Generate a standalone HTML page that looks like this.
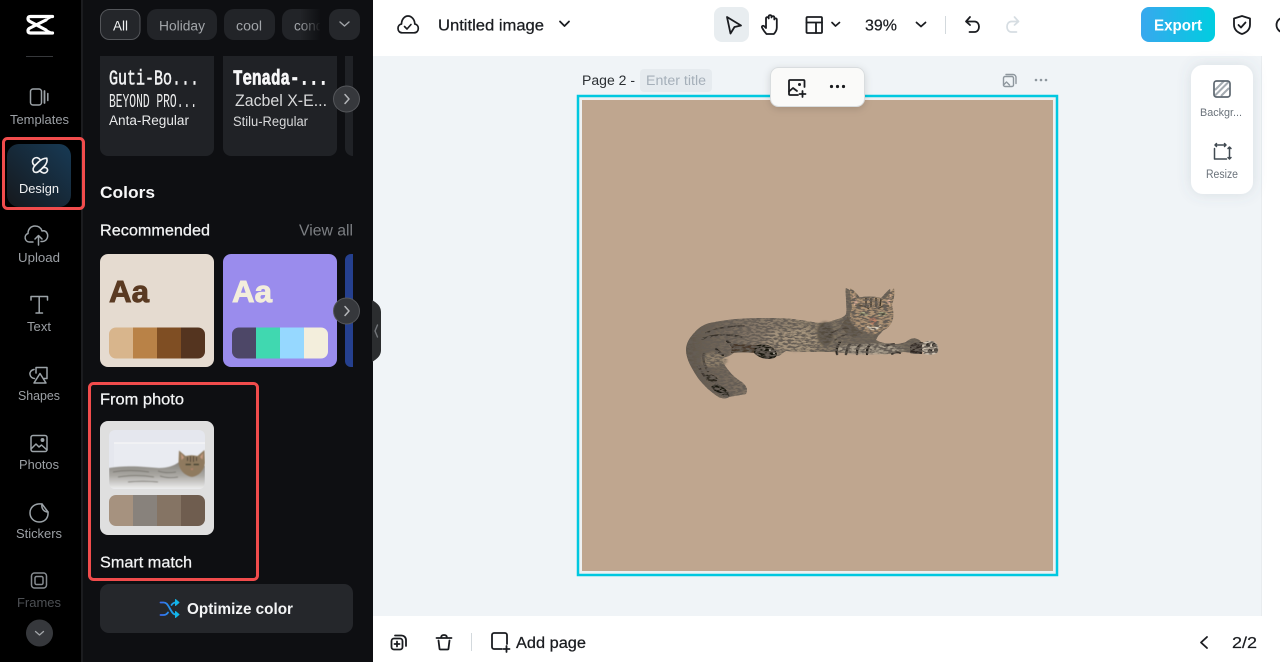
<!DOCTYPE html>
<html><head><meta charset="utf-8"><title>Design</title>
<style>
html,body{margin:0;padding:0;width:1280px;height:662px;overflow:hidden;background:#fff}
svg{display:block;position:absolute;left:0;top:0}
text{font-family:"Liberation Sans",sans-serif}
.n{font-size:13px;fill:#9ca0a5;text-anchor:start}
.k{fill:#1a1c20}
.i{fill:none;stroke:#1a1c20;stroke-width:1.800;stroke-linecap:round;stroke-linejoin:round}
.s{fill:none;stroke:#9ca3a8;stroke-width:1.500;stroke-linecap:round;stroke-linejoin:round}
</style></head><body>
<svg width="1280" height="662" viewBox="0 0 1280 662" xmlns="http://www.w3.org/2000/svg">
<defs>
<linearGradient id="dg" x1="0" y1="1" x2="1" y2="0"><stop offset="0" stop-color="#16181c"/><stop offset="1" stop-color="#173a55"/></linearGradient>
<linearGradient id="ex" x1="0" y1="0" x2="1" y2="0"><stop offset="0" stop-color="#38a8ee"/><stop offset="1" stop-color="#00cde0"/></linearGradient>
<linearGradient id="fade" x1="0" y1="0" x2="1" y2="0"><stop offset="0" stop-color="#0e0f12" stop-opacity="0"/><stop offset="1" stop-color="#0e0f12" stop-opacity=".95"/></linearGradient>
<linearGradient id="sh" x1="0" y1="0" x2="1" y2="0"><stop offset="0" stop-color="#3a6bf0"/><stop offset="1" stop-color="#12b6e8"/></linearGradient>
<linearGradient id="body" x1="0" y1="0" x2="1" y2="0"><stop offset="0" stop-color="#5e554a"/><stop offset=".3" stop-color="#87796a"/><stop offset=".5" stop-color="#9a8a74"/><stop offset=".72" stop-color="#6f6558"/><stop offset="1" stop-color="#746a5c"/></linearGradient>
<linearGradient id="tb" x1="0" y1="0" x2="0" y2="1"><stop offset="0" stop-color="#85827c"/><stop offset=".5" stop-color="#aaa8a3"/><stop offset="1" stop-color="#eeeeee"/></linearGradient>
<clipPath id="c1"><rect x="100" y="56" width="253" height="100"/></clipPath>
<clipPath id="c2"><rect x="109" y="430" width="96" height="59" rx="6"/></clipPath>
<clipPath id="p1"><rect x="109" y="327.500" width="96" height="31" rx="7"/></clipPath>
<clipPath id="p2"><rect x="232" y="327.500" width="96" height="31" rx="7"/></clipPath>
<clipPath id="p3"><rect x="109" y="495" width="96" height="31" rx="7"/></clipPath>
<filter id="sd" x="-20%" y="-30%" width="140%" height="170%"><feDropShadow dx="0" dy="2" stdDeviation="4" flood-color="#000" flood-opacity=".14"/></filter>
<filter id="sd2" x="-40%" y="-20%" width="180%" height="140%"><feDropShadow dx="0" dy="0" stdDeviation="7" flood-color="#5a6a78" flood-opacity=".16"/></filter>
<filter id="b1"><feGaussianBlur stdDeviation=".5"/></filter>
<filter id="b2"><feGaussianBlur stdDeviation="1.200"/></filter>
<filter id="fur" x="-5%" y="-5%" width="110%" height="110%">
<feTurbulence type="fractalNoise" baseFrequency=".22 .6" numOctaves="2" seed="7" result="n"/>
<feColorMatrix in="n" type="matrix" values="0 0 0 0 .13  0 0 0 0 .11  0 0 0 0 .09  5 0 0 0 -2" result="d"/>
<feComposite in="d" in2="SourceAlpha" operator="in" result="dc"/>
<feMerge result="m"><feMergeNode in="SourceGraphic"/><feMergeNode in="dc"/></feMerge>
<feGaussianBlur in="m" stdDeviation=".35"/>
</filter>
</defs>

<!-- backgrounds -->
<rect width="1280" height="662" fill="#f0f4f7"/>
<rect x="373" y="0" width="907" height="56" fill="#fff"/>
<rect x="373" y="616" width="907" height="46" fill="#fff"/>
<rect x="1262" y="56" width="18" height="560" fill="#fff"/>
<rect x="1261" y="56" width="1" height="560" fill="#e8ecef"/>
<rect width="82" height="662" fill="#000"/>
<rect x="81" width="2" height="662" fill="#1b1c1f"/>
<rect x="83" width="290" height="662" fill="#0e0f12"/>

<!-- logo -->
<g fill="none" stroke="#fff" stroke-linecap="round" stroke-linejoin="round">
<path d="M52.500 16.500H30.500Q28 16.500 28 18.800Q28 20.500 30 21.500L46 30" stroke-width="3.200"/>
<path d="M52.500 33H30.500Q28 33 28 30.700Q28 29 30 28L46 20" stroke-width="3.200"/>
<path d="M45 20.500L52 16.500M45 29.500L52 33" stroke-width="2"/>
</g>
<rect x="26" y="56" width="27" height="1" fill="#36383b"/>

<!-- sidebar -->
<g class="s">
<rect x="30.500" y="89" width="11" height="16" rx="2.500"/><path d="M44.500 91v12" stroke-width="1.800"/><path d="M47.800 93.500v7" stroke-width="1.500"/>
</g>
<text class="n" x="10" y="124" textLength="59" lengthAdjust="spacingAndGlyphs">Templates</text>
<rect x="7" y="144" width="64" height="63" rx="12" fill="url(#dg)"/>
<g fill="none" stroke="#f1f2f3" stroke-width="1.600" stroke-linecap="round" stroke-linejoin="round">
<path d="M46.800 158.200C43 158.200 40.500 160 38.500 162L35.500 165C33 167.500 32.500 170 34 171.800C36 173 38.500 172 40.500 170L44 166.500C46 164.500 47.800 162 46.800 158.200Z"/>
<path d="M34 165C32 163 32 160 34 158.500C36 157 38.500 157.500 40 159.500"/>
<path d="M42.500 168C44.500 167 47 167.500 47.500 169.500C48 171.500 45.500 173.500 43.500 173C41.500 172.500 40.500 171.500 39.500 170.500"/>
</g>
<text x="19" y="193" font-size="13" fill="#f1f2f3" textLength="40" lengthAdjust="spacingAndGlyphs">Design</text>
<rect x="3.500" y="138.500" width="80" height="70" rx="4" fill="none" stroke="#f14c4c" stroke-width="3"/>

<g class="s">
<path d="M34 242h-3.500c-5 0-6-7-1.500-8.500 0-4.500 3-7.500 7-7.500 3.500 0 6 1.800 7 5 .5-.2 1-.2 1.500-.2 5.500.3 6 10-1 10.700h-1.500" transform="translate(-1 0)"/>
<path d="M38.500 245v-9M35 239l3.500-3.500 3.500 3.500"/>
</g>
<text class="n" x="18" y="262" textLength="42" lengthAdjust="spacingAndGlyphs">Upload</text>
<g class="s"><path d="M31 300v-3.500h16.500v3.500M39.200 296.500v16M36 313h6.500"/></g>
<text class="n" x="27" y="331" textLength="24" lengthAdjust="spacingAndGlyphs">Text</text>
<g class="s">
<path d="M34 369.500c-3 .5-4.500 3-4 5 .5 2.500 2.500 4 4.500 4"/>
<path d="M36 373v-5.500h11v11h-3"/>
<path d="M40 373.500l6 9.500h-12z"/>
</g>
<text class="n" x="18" y="400" textLength="42" lengthAdjust="spacingAndGlyphs">Shapes</text>
<g class="s">
<rect x="31" y="435.500" width="16" height="16" rx="2"/><path d="M31 449l5-5 3 3 2.500-2 5.500 5"/><circle cx="42.500" cy="440" r="1.200" fill="#9ca3a8"/>
</g>
<text class="n" x="19" y="469" textLength="40" lengthAdjust="spacingAndGlyphs">Photos</text>
<g class="s"><path d="M42 504c-7-1-12 3-12 9 0 5 4 9 9 9 6 0 9.500-4 9-10-3.500 0-7-3-6-8z"/><path d="M42 504l6 8"/></g>
<text class="n" x="16" y="538" textLength="46" lengthAdjust="spacingAndGlyphs">Stickers</text>
<g class="s" style="stroke:#868b90"><rect x="31.500" y="573" width="15" height="15" rx="3"/><rect x="35" y="576.500" width="8" height="8" rx="1.500"/></g>
<text class="n" x="17" y="607" textLength="44" lengthAdjust="spacingAndGlyphs" style="fill:#4d5054">Frames</text>
<circle cx="39.500" cy="633" r="13.500" fill="#36383c"/>
<path d="M35.500 631.500l4 3.500 4-3.500" fill="none" stroke="#a2a5a9" stroke-width="1.300" stroke-linecap="round" stroke-linejoin="round"/>

<!-- pills -->
<rect x="100.500" y="9.500" width="39.500" height="30" rx="9" fill="#24262a" stroke="#54565a"/>
<text x="113" y="30.500" font-size="13.500" fill="#f0f1f2" textLength="15" lengthAdjust="spacingAndGlyphs">All</text>
<rect x="147" y="9" width="70" height="31" rx="10" fill="#222428"/>
<text x="159" y="30.500" font-size="13.500" fill="#a2a5a9" textLength="46" lengthAdjust="spacingAndGlyphs">Holiday</text>
<rect x="224" y="9" width="51" height="31" rx="10" fill="#222428"/>
<text x="236" y="30.500" font-size="13.500" fill="#a2a5a9" textLength="26" lengthAdjust="spacingAndGlyphs">cool</text>
<svg x="282" y="0" width="38" height="50" viewBox="282 0 38 50">
<rect x="282" y="9" width="50" height="31" rx="10" fill="#222428"/>
<text x="294" y="30.500" font-size="13.500" fill="#a2a5a9">cond</text>
<rect x="300" y="9" width="20" height="31" fill="url(#fade)"/>
</svg>
<rect x="329" y="9" width="31" height="31" rx="10" fill="#25272b"/>
<path d="M340 22l4.500 4 4.500-4" fill="none" stroke="#a2a5a9" stroke-width="1.400" stroke-linecap="round" stroke-linejoin="round"/>

<!-- font cards -->
<g clip-path="url(#c1)">
<rect x="100" y="46" width="114" height="110" rx="8" fill="#202226"/>
<rect x="223" y="46" width="114" height="110" rx="8" fill="#202226"/>
<rect x="345" y="46" width="30" height="110" rx="8" fill="#202226"/>
</g>
<text x="109" y="84.500" font-size="21" fill="#f2f3f4" stroke="#f2f3f4" stroke-width=".5" style="font-family:'Liberation Mono',monospace" textLength="90" lengthAdjust="spacingAndGlyphs">Guti-Bo...</text>
<text x="109" y="107" font-size="19" fill="#eceded" style="font-family:'Liberation Mono',monospace" textLength="88" lengthAdjust="spacingAndGlyphs">BEYOND PRO...</text>
<text x="109" y="125" font-size="13.500" fill="#e8e9ea" textLength="80" lengthAdjust="spacingAndGlyphs">Anta-Regular</text>
<text x="233" y="84.500" font-size="21" font-weight="700" fill="#f7f7f8" stroke="#f7f7f8" stroke-width=".7" style="font-family:'Liberation Mono',monospace" textLength="95" lengthAdjust="spacingAndGlyphs">Tenada-...</text>
<text x="235" y="106" font-size="17" fill="#d8d9da" textLength="92" lengthAdjust="spacingAndGlyphs">Zacbel X-E...</text>
<text x="233" y="126" font-size="13.500" fill="#d8d9da" textLength="75" lengthAdjust="spacingAndGlyphs">Stilu-Regular</text>
<circle cx="346.500" cy="99" r="13" fill="#36383c" stroke="#55575b"/>
<path d="M345 94.500l4 4.500-4 4.500" fill="none" stroke="#b4b6b9" stroke-width="1.500" stroke-linecap="round" stroke-linejoin="round"/>

<text x="100" y="198" font-size="17" font-weight="700" fill="#f7f7f8" textLength="55" lengthAdjust="spacingAndGlyphs">Colors</text>
<text x="100" y="235.500" font-size="15.500" fill="#f3f4f5" stroke="#f3f4f5" stroke-width=".25" textLength="110" lengthAdjust="spacingAndGlyphs">Recommended</text>
<text x="299" y="235.500" font-size="15.500" fill="#7c7f83" textLength="54" lengthAdjust="spacingAndGlyphs">View all</text>

<!-- color cards -->
<rect x="100" y="254" width="114" height="113" rx="8" fill="#e5dbd0"/>
<text x="109" y="302" font-size="31" font-weight="700" fill="#5a3a22" stroke="#5a3a22" stroke-width=".9" textLength="40" lengthAdjust="spacingAndGlyphs">Aa</text>
<g clip-path="url(#p1)">
<rect x="109" y="327" width="24" height="32" fill="#d8b58c"/><rect x="133" y="327" width="24" height="32" fill="#b98247"/><rect x="157" y="327" width="24" height="32" fill="#7f4e23"/><rect x="181" y="327" width="24" height="32" fill="#54341f"/>
</g>
<rect x="223" y="254" width="114" height="113" rx="8" fill="#9a8ced"/>
<text x="232" y="302" font-size="31" font-weight="700" fill="#f3eedc" stroke="#f3eedc" stroke-width=".9" textLength="40" lengthAdjust="spacingAndGlyphs">Aa</text>
<g clip-path="url(#p2)">
<rect x="232" y="327" width="24" height="32" fill="#4d4767"/><rect x="256" y="327" width="24" height="32" fill="#40d8b0"/><rect x="280" y="327" width="24" height="32" fill="#96d8ff"/><rect x="304" y="327" width="24" height="32" fill="#f3eedc"/>
</g>
<path d="M353 254h-2a6 6 0 0 0-6 6v101a6 6 0 0 0 6 6h2z" fill="#25408f"/>
<circle cx="346.500" cy="311" r="13" fill="#36383c" stroke="#55575b"/>
<path d="M345 306.500l4 4.500-4 4.500" fill="none" stroke="#b4b6b9" stroke-width="1.500" stroke-linecap="round" stroke-linejoin="round"/>

<!-- collapse handle -->
<path d="M372 300c3 2 9 5 9 12v38c0 7-6 10-9 12z" fill="#2b2d2f"/>
<path d="M377.500 325l-2.500 6 2.500 6" fill="none" stroke="#73767a" stroke-width="1.400" stroke-linecap="round" stroke-linejoin="round"/>

<!-- from photo -->
<rect x="89.500" y="383.500" width="168" height="196" rx="4" fill="none" stroke="#f14c4c" stroke-width="3"/>
<text x="100" y="404.500" font-size="15.500" fill="#f3f4f5" stroke="#f3f4f5" stroke-width=".25" textLength="84" lengthAdjust="spacingAndGlyphs">From photo</text>
<rect x="100" y="421" width="114" height="114" rx="8" fill="#dfdfdf"/>
<g clip-path="url(#c2)">
<rect x="109" y="430" width="96" height="59" fill="#e5e7ee"/>
<rect x="114" y="443" width="91" height="28" fill="#e9ebf1"/>
<path d="M114 443h91" stroke="#f4f4f6" stroke-width="1.500" fill="none"/>
<g filter="url(#b1)">
<path d="M109 468c20-3 35-1 50 0 8 0 15-2 20-6l26 4v23h-96z" fill="url(#tb)"/>
<path d="M113 472c12-2 24-2 36 0M118 477c12-2 24-2 36 0M128 482c10-1 20-1 30 0M158 471c6 2 12 2 18 1M160 476c6 2 12 2 18 1" stroke="#6f6c66" stroke-width="1" fill="none" opacity=".75"/>
<path d="M179 450.500l6.500 5.500c4-1 8-1 12 0l7-6 .5 13c-1 8-6 13-13 14-6.500-1-12.500-6-13.500-14z" fill="#8f7a5f"/>
<path d="M181 453.500l3 4-2.500 2.500zM203 453l-3 4 2.500 2.500z" fill="#c69a80"/>
<path d="M185.500 464.500h5.500M193.500 464.500h5.500" stroke="#454232" stroke-width="1.600"/>
<path d="M190.500 456v6M193.500 456v6M187.500 457v4M196.500 457v4" stroke="#453c30" stroke-width="1"/>
<path d="M190.500 468.500h3l-1.500 2z" fill="#b5806c"/>
</g>
</g>
<g clip-path="url(#p3)">
<rect x="109" y="495" width="24" height="31" fill="#a6927f"/><rect x="133" y="495" width="24" height="31" fill="#88827c"/><rect x="157" y="495" width="24" height="31" fill="#857464"/><rect x="181" y="495" width="24" height="31" fill="#6f5d4f"/>
</g>
<text x="100" y="567.500" font-size="15.500" fill="#f3f4f5" stroke="#f3f4f5" stroke-width=".25" textLength="92" lengthAdjust="spacingAndGlyphs">Smart match</text>

<!-- optimize -->
<rect x="100" y="584" width="253" height="49" rx="9" fill="#25272b"/>
<g fill="none" stroke="url(#sh)" stroke-width="1.800" stroke-linecap="round" stroke-linejoin="round">
<path d="M160.500 602.500h3c3 0 4 2 5.500 4.500l2 3.500c1.500 2.500 2.500 4 5 4h1.500"/>
<path d="M160.500 615h3c2 0 3.500-1 4.500-2.500M171.500 605c1-1.500 2.500-2.500 4.500-2.500h1.500"/>
</g>
<path d="M175.500 599.500l3.500 3-3.500 3zM175.500 611.500l3.500 3-3.500 3z" fill="#12b6e8" stroke="#12b6e8" stroke-linejoin="round"/>
<text x="187" y="614" font-size="15.500" font-weight="700" fill="#f3f4f5" textLength="106" lengthAdjust="spacingAndGlyphs">Optimize color</text>

<!-- top bar left -->
<g class="i">
<path d="M402.500 32.800c-3 0-4.500-2-4.500-4.500 0-2.300 1.500-4 3.500-4.300 0-4.500 3-8 6.500-8s6.800 3.500 6.800 8c2 .3 3.500 2 3.500 4.300 0 2.500-1.500 4.500-4.500 4.500z" stroke-width="1.700"/>
<path d="M404.500 26.500l2.500 2.500 4-4.500" stroke-width="1.600"/>
<path d="M560 21.500l4.500 4.500 4.500-4.500"/>
</g>
<text class="k" x="438" y="30.500" font-size="15.500" stroke="#1a1c20" stroke-width=".25" textLength="106" lengthAdjust="spacingAndGlyphs">Untitled image</text>

<!-- top bar middle -->
<rect x="714" y="7" width="35" height="35" rx="8" fill="#e8edf0"/>
<path class="i" d="M727 17l14 8.500-6.500 1.500-4 6.500z" stroke-width="1.700"/>
<path class="i" d="M766.500 34c-2-2-3.500-4.500-4.500-6.500-.5-1.500 1-2.500 2.500-1l1.500 1.500v-9.500c0-1.800 2.700-1.800 2.700 0v-2c0-1.800 2.800-1.800 2.800 0v1c0-1.800 2.800-1.800 2.800 0v2c0-1.500 2.500-1.500 2.500.2v7.800c0 3-1.500 5-3 6.500z" stroke-width="1.600"/>
<g class="i" stroke-width="1.900"><rect x="806.500" y="17" width="15.500" height="16" rx="1"/><path d="M806.500 22.500h15.500M816 22.500v10.500"/><path d="M832 22.500l3.500 3.500 4-3.500" stroke-width="1.700"/></g>
<text class="k" x="865" y="30.500" font-size="15.500" stroke="#1a1c20" stroke-width=".2" textLength="32" lengthAdjust="spacingAndGlyphs">39%</text>
<path class="i" d="M916.500 22.500l4.500 4 4.500-4" stroke-width="1.700"/>
<rect x="945" y="16" width="1" height="18" fill="#d3d9dd"/>
<path class="i" d="M970 17l-4 4.500 4 3.500M966.500 21.500h8c6 0 6 10.500 0 10.500h-5" stroke-width="1.700"/>
<path d="M1014.500 17l4 4.500-4 3.500M1018 21.500h-6.500c-6 0-6 10.500 0 10.500h5" fill="none" stroke="#d6dde2" stroke-width="1.700" stroke-linecap="round" stroke-linejoin="round"/>

<!-- export -->
<rect x="1141" y="7" width="74" height="35" rx="8" fill="url(#ex)"/>
<text x="1154" y="30.500" font-size="15.500" font-weight="700" fill="#fff" textLength="48" lengthAdjust="spacingAndGlyphs">Export</text>
<path class="i" d="M1242 16l8 2.500v6c0 5-3.500 8-8 9.500-4.500-1.500-8-4.500-8-9.500v-6z"/>
<path class="i" d="M1238.500 25l2.500 2.500 4.500-5"/>
<circle cx="1284" cy="25" r="7.500" fill="none" stroke="#1a1c20" stroke-width="1.800"/>

<!-- canvas -->
<text x="582" y="85" font-size="13.500" fill="#2b2f33" textLength="53" lengthAdjust="spacingAndGlyphs">Page 2 -</text>
<rect x="640" y="69" width="72" height="23" rx="4" fill="#e6ebef"/>
<text x="646" y="85" font-size="13.500" fill="#a5afb9" textLength="60" lengthAdjust="spacingAndGlyphs">Enter title</text>
<rect x="578" y="96" width="479" height="479" fill="#eef0f1" stroke="#00c8e0" stroke-width="2.500"/>
<rect x="582" y="100" width="471" height="471" fill="#bfa68f"/>

<!-- cat -->
<g transform="translate(670 270)" filter="url(#fur)">
<path fill="url(#body)" d="M59 127c-2 2-8 2-12-1-6-4-13-10-19-18-6-9-12-19-12-28 0-7 4-13 9-18 5-6 12-9 20-10 15-3 30-4 50-4 12 0 24 0 35 2 8 1 16 3 23 3 6-1 12-3 18-5 2-1 4-2 5-4 1-5 0-10 0-14 0-5-1-10 0-12 3 1 8 6 11 10 8-2 17-2 24 0 3-3 6-7 9-9 1 4 0 11-2 17 1 4 2 9 1 14-2 6-6 11-11 16l-2 4c5 3 12 4 19 4 4 0 8-1 11-2 3-3 8-5 11-3 4 1 6 5 6 8 0 4-3 6-7 6-5 0-9-1-13-1-4 1-8 2-13 2l-18-1c-13 0-28 0-40-1-16 0-32 0-46-1-3 1-4 4-8 5-5 1-11-1-15-4-7-2-16-3-25-4-2 3-5 6-9 8-4 1-6 2-7 3 1 4 4 8 7 12 3 4 7 7 11 10 4 2 6 5 7 8 0 2-.5 4-1 5z"/>
<ellipse cx="125" cy="70" rx="32" ry="11" fill="#b3a188" opacity=".55" filter="url(#b2)"/>
<ellipse cx="200" cy="79" rx="34" ry="5" fill="#b8ad9b" opacity=".8" filter="url(#b2)"/>
<ellipse cx="44" cy="90" rx="13" ry="7" fill="#a08f77" opacity=".7" filter="url(#b2)"/>
<ellipse cx="155" cy="64" rx="8" ry="12" fill="#2f2a24" opacity=".6" filter="url(#b2)"/>
<g fill="none" stroke="#26221e" stroke-linecap="round">
<path d="M36 63c10-5 24-7 38-7" stroke-width="1.600" opacity=".75"/>
<path d="M32 69c12-5 26-5 40-2" stroke-width="1.800" opacity=".75"/>
<path d="M46 79c2 2 4 4 7 6" stroke-width="2.400"/>
<path d="M57 71c3 2 4 3 6 6" stroke-width="2.200"/>
<path d="M170 72c-3 3-4 8-3 12M180 74c-3 3-3 7-4 10M190 75c-3 3-3 6-3 9M200 75c-3 2-3 6-3 9" stroke-width="2.400"/>
<path d="M160 64c6-4 13-6 19-6M165 70c4-3 8-5 14-6" stroke-width="1.500" opacity=".6"/>
<path d="M215 76c3-1 6-2 9-2M222 84c3-2 6-2 8-1" stroke-width="2" opacity=".8"/>
<path d="M34 84c-2 5 1 12 4 17M28 96c3 4 6 10 9 13" stroke-width="2.500" opacity=".6"/>
</g>
<path d="M62 74c10 0 20 1 30 2l-1 8c-9-2-20-2-30-1z" fill="#453628" opacity=".95"/>
<path d="M85 76c4-2 11-2 15 0 4 2 7 6 7 9-1 3-5 4-9 4-6 0-11-3-14-6z" fill="#17140f"/>
<g fill="#a09a8e"><circle cx="94" cy="79" r="1.300"/><circle cx="100" cy="80" r="1.300"/><circle cx="104" cy="83" r="1.200"/><circle cx="97" cy="85" r="1.300"/></g>
<path d="M46 113c4 2 9 5 13 10 1 3 0 5-3 4-5-1-12-6-15-10z" fill="#16130f"/>
<path d="M36 105c4-2 9 0 12 4-1 3-5 5-9 3z" fill="#2b251f"/>
<path d="M240 75c4-2 9-3 13-3l-1 12c-4 0-8 0-12-1z" fill="#2d2720"/>
<path d="M253 73c4-3 9-3 13 0 3 3 3 8 1 10-3 2-8 2-13 1-2-3-3-8-1-11z" fill="#cfc3b2"/>
<g fill="#2c2520"><circle cx="258" cy="75" r="2"/><circle cx="264" cy="75" r="2"/><circle cx="266" cy="80" r="1.900"/><circle cx="260" cy="81" r="2.300"/></g>
<path fill="#ae9374" d="M180 18c4 2 8 7 11 11 8-2 17-2 24 0 3-3 6-8 9-11 1 5 0 11-2 17 1 4 2 9 1 14-2 7-7 11-12 12-3 1-5 4-9 3-4 1-7-2-11-4-6-2-11-8-11-14 0-3 1-5 2-8-1-6-2-13-2-20z"/>
<path d="M183 24c2 3 3 6 5 8l-4 4zM221 22c-1 4-2 8-5 10l4 3z" fill="#d8ae96"/>
<path d="M196 28v8M201 28v9M206 28v9M211 29l-1 7" stroke="#3c3528" stroke-width="1.500"/>
<path d="M188 36c5-1 9 1 11 3M219 36c-5-1-9 1-11 3" stroke="#4a3e2d" stroke-width="1.200" fill="none"/>
<ellipse cx="194" cy="44" rx="4.500" ry="2" fill="#b7b88e"/><ellipse cx="212" cy="44" rx="4.500" ry="2" fill="#b7b88e"/>
<path d="M190.500 44h7M208.500 44h7" stroke="#26251c" stroke-width="1"/>
<path d="M200 47h6l1 5-4 3-4-3z" fill="#bd8066"/>
<path d="M196 55c3 3 11 3 15 0-1 3-4 5-7 5-4 0-7-2-8-5z" fill="#dbd0be"/>
<path d="M178 46c2 8 9 15 16 17-5 1-7 4-9 5-6-2-11-6-14-12 2-4 5-7 7-10z" fill="#4f4538" opacity=".6"/>
</g>

<!-- floating toolbar -->
<rect x="770.500" y="67.500" width="94" height="39" rx="8" fill="#fafaf9" stroke="#d9dddf" filter="url(#sd)"/>
<g class="i" stroke-width="1.700">
<path d="M804.500 87V81a1 1 0 0 0-1-1H790a1 1 0 0 0-1 1v13a1 1 0 0 0 1 1h8"/>
<path d="M789 91.500l4-3.500 4 3"/>
<path d="M802.500 91v6M799.500 94h6"/>
</g>
<circle cx="799.500" cy="84.500" r="1.500" fill="#1a1c20"/>
<g fill="#1a1c20"><circle cx="831.500" cy="86.500" r="1.600"/><circle cx="837.500" cy="86.500" r="1.600"/><circle cx="843.500" cy="86.500" r="1.600"/></g>
<g fill="none" stroke="#8e979e" stroke-width="1.400" stroke-linecap="round" stroke-linejoin="round">
<rect x="1003.500" y="76.500" width="10" height="10" rx="1.500"/>
<path d="M1006 74.500h7a3 3 0 0 1 3 3v6"/>
<path d="M1003.500 85l3-3 3 3"/>
</g>
<g fill="#8e979e"><circle cx="1036" cy="80" r="1.300"/><circle cx="1041" cy="80" r="1.300"/><circle cx="1046" cy="80" r="1.300"/></g>

<!-- right card -->
<rect x="1191" y="65" width="62" height="129" rx="12" fill="#fff" filter="url(#sd2)"/>
<g fill="none">
<path d="M1215 90l9-9M1215 95.500l14-14M1221 96l8-8" stroke="#a4abb1" stroke-width="2"/>
<rect x="1214" y="81" width="16" height="16" rx="2.500" stroke="#5d6770" stroke-width="1.700"/>
</g>
<text x="1200" y="116" font-size="11" fill="#6a727a" textLength="42" lengthAdjust="spacingAndGlyphs">Backgr...</text>
<g fill="none" stroke="#414a52" stroke-width="1.500" stroke-linecap="round" stroke-linejoin="round">
<path d="M1214.500 148.500v10.500h12"/>
<path d="M1215 145h11M1216.500 143.500l-1.500 1.500 1.500 1.500M1224.500 143.500l1.500 1.500-1.500 1.500"/>
<path d="M1229.500 147v12M1228 148.500l1.500-1.500 1.500 1.500M1228 157.500l1.500 1.500 1.500-1.500"/>
</g>
<text x="1206" y="178" font-size="11.500" fill="#6a727a" textLength="32" lengthAdjust="spacingAndGlyphs">Resize</text>

<!-- bottom bar -->
<g class="i" stroke-width="1.700">
<rect x="391.500" y="638.500" width="11" height="11" rx="2.500"/>
<path d="M395 635.500h6.500a4.500 4.500 0 0 1 4.500 4.500v6"/>
<path d="M397 641.500v5M394.500 644h5"/>
<path d="M436.500 638h15M441 638c0-2 1-3 3-3s3 1 3 3M438.500 640.500l1 8a1 1 0 0 0 1 1h7a1 1 0 0 0 1-1l1-8"/>
</g>
<rect x="471" y="633" width="1" height="18" fill="#d3d9dd"/>
<g class="i" stroke-width="1.700">
<path d="M507 644v-9a2 2 0 0 0-2-2h-11a2 2 0 0 0-2 2v12a2 2 0 0 0 2 2h8"/>
<path d="M506.500 646v6M503.500 649h6"/>
</g>
<text class="k" x="516" y="648" font-size="15.500" stroke="#1a1c20" stroke-width=".25" textLength="70" lengthAdjust="spacingAndGlyphs">Add page</text>
<path class="i" d="M1207 637l-6 5.500 6 5.500"/>
<text class="k" x="1232" y="648" font-size="15.500" stroke="#1a1c20" stroke-width=".2" textLength="25" lengthAdjust="spacingAndGlyphs">2/2</text>
</svg>
</body></html>
